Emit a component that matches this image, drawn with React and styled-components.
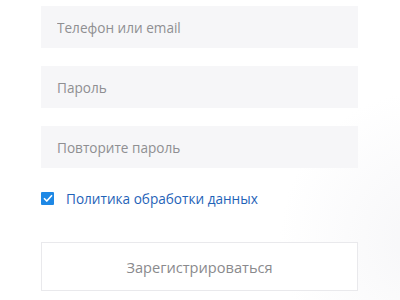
import React from 'react'
import styled, { createGlobalStyle } from 'styled-components'

const GlobalStyle = createGlobalStyle`
  html, body {
    margin: 0;
    padding: 0;
    background: #ffffff;
  }
  body {
    font-family: "Open Sans", "Liberation Sans", sans-serif;
  }
`

const Page = styled.div`
  width: 400px;
  height: 300px;
  overflow: hidden;
  background: radial-gradient(circle at 430px 240px, #f6f6f8 0, #ffffff 150px);
`

const Form = styled.form`
  width: 317px;
  margin-left: 41px;
  padding-top: 6px;
  display: flex;
  flex-direction: column;
`

const Field = styled.input`
  box-sizing: border-box;
  width: 100%;
  height: 42px;
  margin-bottom: 18px;
  padding: 0 16px;
  border: none;
  outline: none;
  background: #f6f6f8;
  font-family: inherit;
  font-size: 13.6px;
  color: #333;

  &::placeholder {
    color: #8f8f92;
  }
`

const Agree = styled.label`
  display: flex;
  align-items: center;
  gap: 12px;
  margin-top: 2px;
  height: 20px;
  font-size: 13.6px;
  color: #1f63b8;
`

const Box = styled.span`
  flex-shrink: 0;
  width: 13px;
  height: 13px;
  border-radius: 1px;
  background: #1e88e5;
  display: flex;
  align-items: center;
  justify-content: center;
`

const Submit = styled.button`
  box-sizing: border-box;
  width: 100%;
  height: 49px;
  margin-top: 34px;
  background: #ffffff;
  border: 1px solid #e9e9ec;
  font-family: inherit;
  font-size: 14.6px;
  color: #8a8a8d;
  cursor: pointer;
`

const App = () => {
  return (
    <Page>
      <GlobalStyle />
      <Form onSubmit={e => e.preventDefault()}>
        <Field type="text" placeholder="Телефон или email" />
        <Field type="password" placeholder="Пароль" />
        <Field type="password" placeholder="Повторите пароль" />
        <Agree>
          <Box>
            <svg width="10" height="8" viewBox="0 0 10 8">
              <path d="M1 4.2 L3.8 7 L9 1.2" fill="none" stroke="#fff" strokeWidth="1.6" />
            </svg>
          </Box>
          Политика обработки данных
        </Agree>
        <Submit type="submit">Зарегистрироваться</Submit>
      </Form>
    </Page>
  )
}

export default App
